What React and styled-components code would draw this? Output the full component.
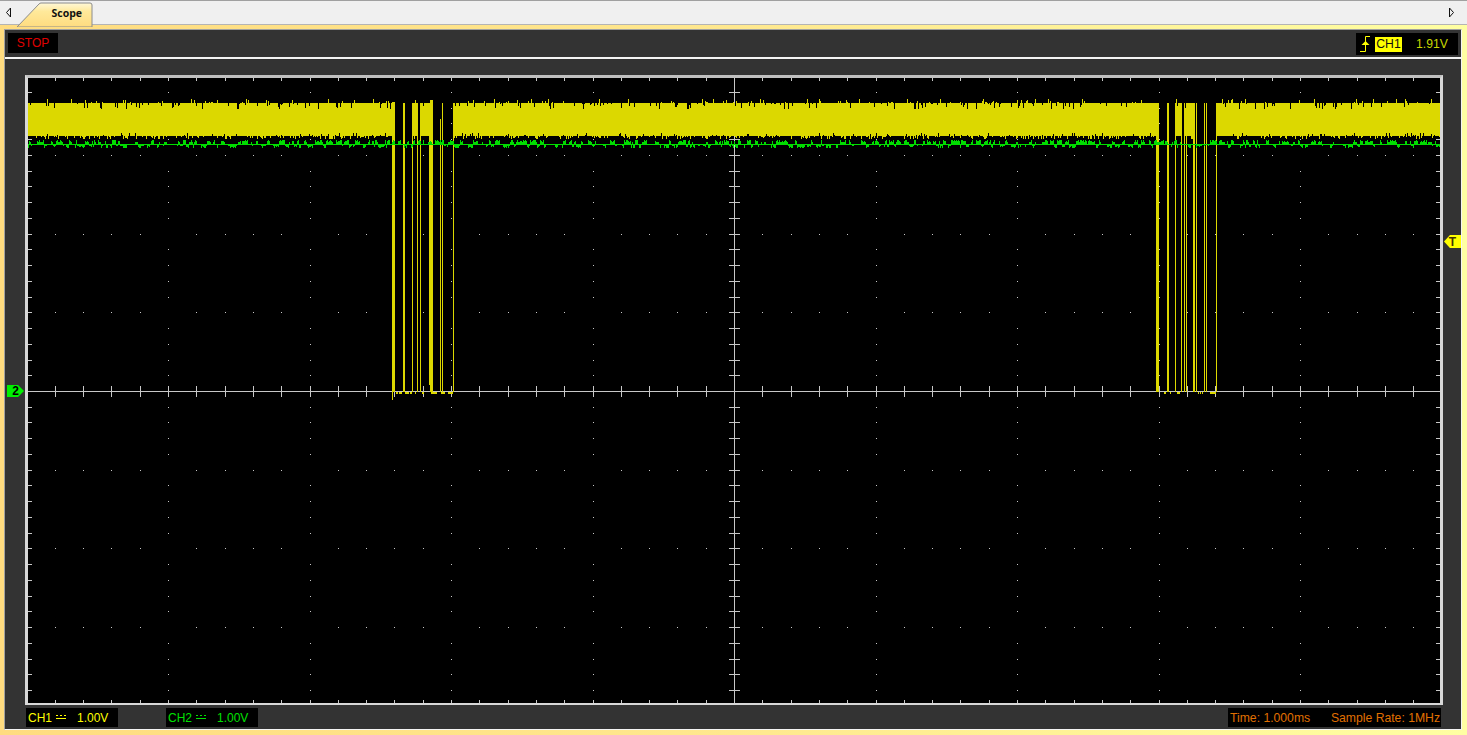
import styled, { createGlobalStyle } from 'styled-components'

const GlobalStyle = createGlobalStyle`
  html, body { margin: 0; padding: 0; background: #000; }
  body { font-family: "Liberation Sans", Arial, sans-serif; }
`

const Page = styled.div`
  width: 1467px;
  height: 735px;
  display: flex;
  flex-direction: column;
  overflow: hidden;
  background: linear-gradient(90deg, #ffdc80 0%, #ffe88e 50%, #ffffa2 100%);
`

const TabBar = styled.div`
  height: 25px;
  box-sizing: border-box;
  display: flex;
  align-items: stretch;
  background: #f0f0f0;
  border-top: 1px solid #a0a0a0;
  border-bottom: 1px solid #b4b4b4;
`

const NavButton = styled.div`
  width: 17px;
  display: flex;
  align-items: center;
  justify-content: center;
  margin-left: ${p => p.$right ? 'auto' : '0'};
  margin-right: ${p => p.$right ? '7px' : '0'};
`

const Tab = styled.div`
  position: relative;
  width: 76px;
  height: 25px;
  margin-top: 1px;
  display: flex;
  align-items: center;
  justify-content: flex-end;
  padding: 0 11px 3px 0;
  box-sizing: border-box;
  font-family: "Open Sans", sans-serif;
  font-weight: 700;
  font-size: 10.5px;
  color: #111;
`

const TabShape = styled.svg`
  position: absolute;
  left: 0;
  top: 0;
`

const TabLabel = styled.span`
  position: relative;
`

const Panel = styled.div`
  position: relative;
  flex: 1;
  margin: 4px 5px 5px 4px;
  display: flex;
  flex-direction: column;
  background: #333333;
  border: 1px solid #f4f4f4;
  border-left-color: #a0a0a0;
  border-top-color: #a0a0a0;
`

const TopBar = styled.div`
  height: 29px;
  box-sizing: border-box;
  padding: 3px 3px 0;
  display: flex;
  justify-content: space-between;
  align-items: flex-start;
  border-bottom: 2px solid #f4f4f4;
`

const StatusBox = styled.div`
  width: 50px;
  height: 20px;
  background: #000;
  color: #e00000;
  font-size: 12px;
  line-height: 21px;
  text-align: center;
`

const TriggerBox = styled.div`
  width: 102px;
  height: 22px;
  box-sizing: border-box;
  padding-left: 3px;
  display: flex;
  align-items: center;
  background: #000;
  font-size: 12.2px;
`

const TriggerChannel = styled.span`
  width: 27px;
  height: 15px;
  margin-left: 3px;
  background: #ffff00;
  color: #111;
  line-height: 15px;
  text-align: center;
`

const TriggerLevel = styled.span`
  margin-left: 14px;
  color: #c8d800;
`

const Plot = styled.div`
  height: 630px;
  box-sizing: border-box;
  margin: 16px 18px 0 20px;
  background: #000;
  border: 3px solid #d8d8d8;
  border-bottom-width: 2px;
  border-top-color: #c0c0c0;
`

const Scope = styled.svg`
  display: block;
`

const BottomBar = styled.div`
  flex: 1;
  padding: 3px 20px 0 21px;
  display: flex;
  align-items: flex-start;
  gap: 48px;
`

const ChannelBox = styled.div`
  width: 92px;
  height: 19px;
  box-sizing: border-box;
  padding-left: 2px;
  display: flex;
  align-items: center;
  background: #000;
  color: ${p => p.$color};
  font-size: 12px;
`

const Coupling = styled.svg`
  margin-left: 4px;
  margin-right: 11px;
`

const TimeBox = styled.div`
  width: 213px;
  height: 19px;
  box-sizing: border-box;
  margin-left: auto;
  padding: 0 1px 0 2px;
  display: flex;
  align-items: center;
  justify-content: space-between;
  background: #000;
  color: #e07000;
  font-size: 12.2px;
`

const Marker = styled.div`
  position: absolute;
  top: ${p => p.$top}px;
  left: ${p => p.$left}px;
  width: 17px;
  height: ${p => p.$h}px;
  display: flex;
  align-items: center;
  justify-content: center;
  background: ${p => p.$color};
  color: ${p => p.$text};
  font-family: "Liberation Sans", sans-serif;
  font-weight: 700;
  font-size: 12px;
  clip-path: ${p => p.$shape};
`

// scope trace data, page coordinates
const CX = 734
const CY = 391
const XMINOR = 28.3
const YMINOR = 15.74
const X0 = 28
const X1 = 1440
const YELLOW = '#dcd800'
const GREEN = '#00dc00'
const GRID = '#c8c8c8'

let seed = 73
const rnd = () => {
  seed = (seed * 1664525 + 1013904223) % 4294967296
  return seed / 4294967296
}

const bands = [
  [28, 393], [412, 418], [421, 430], [453, 1156],
  [1176, 1182], [1184, 1194], [1217, 1440],
]

const tall = [
  [392, 395, 102, 392], [403, 405, 103, 392], [412, 413, 103, 392], [417, 418, 103, 392],
  [420, 421, 103, 392], [429, 430, 103, 385], [430, 433, 100, 392], [440, 441, 119, 392],
  [442, 443, 103, 392], [453, 454, 103, 392], [392, 393, 392, 400],
  [1156, 1159, 103, 392], [1167, 1169, 103, 392], [1175, 1176, 103, 392], [1181, 1182, 103, 392],
  [1184, 1185, 113, 392], [1186, 1187, 103, 392], [1193, 1195, 103, 392], [1196, 1197, 103, 392],
  [1204, 1205, 103, 392], [1206, 1207, 103, 392], [1216, 1217, 103, 392],
]

const blobs = [
  [396, 398], [399, 402], [405, 409], [410, 412], [415, 416], [422, 424], [431, 437], [441, 445], [448, 453],
  [1164, 1166], [1170, 1171], [1177, 1180], [1198, 1199], [1200, 1201], [1202, 1203], [1210, 1216],
]

const buildBand = () => {
  let d = ''
  bands.forEach(([a, b]) => {
    for (let x = a; x < b; x++) {
      let top = 103
      let bottom = 136
      const r = rnd()
      if (r < 0.14) top = 104 + Math.floor(rnd() * 6)
      else if (r < 0.24) top = 99 + Math.floor(rnd() * 4)
      const q = rnd()
      if (q < 0.08) bottom = 133 + Math.floor(rnd() * 3)
      else if (q < 0.34) bottom = 137 + Math.floor(rnd() * 3)
      d += `M${x + 0.5} ${top}V${bottom}`
    }
  })
  return d
}

const buildGreen = () => {
  let d = `M${X0} 144.5H${X1}`
  let x = X0
  while (x < X1) {
    const r = rnd()
    const w = 1 + Math.floor(rnd() * 3)
    for (let i = 0; i < w && x + i < X1; i++) {
      const c = x + i + 0.5
      if (r < 0.4) d += `M${c} ${140 + Math.floor(rnd() * 3)}V145`
      else if (r < 0.7) d += `M${c} 144V${146 + Math.floor(rnd() * 3)}`
    }
    x += w
  }
  return d
}

const buildTall = () =>
  tall.map(([a, b, y1, y2]) => `M${a} ${y1}H${b}V${y2}H${a}Z`).join('') +
  blobs.map(([a, b]) => `M${a} 392H${b}V394H${a}Z`).join('')

const buildGrid = () => {
  const lines = []
  const dots = []
  for (let i = -25; i <= 25; i++) {
    const x = Math.round(CX + i * XMINOR)
    lines.push(`M${x + 0.5} 78V81`, `M${x + 0.5} 700V703`, `M${x + 0.5} ${CY - 5}V${CY + 6}`)
    if (i % 5 !== 0) {
      for (let k = -3; k <= 3; k++) dots.push([x, Math.round(CY + k * 5 * YMINOR)])
    }
  }
  for (let i = -19; i <= 19; i++) {
    const y = Math.round(CY + i * YMINOR)
    lines.push(`M28 ${y + 0.5}H32`, `M1436 ${y + 0.5}H1440`, `M${CX - 5} ${y + 0.5}H${CX + 6}`)
    if (i % 5 !== 0) {
      for (let k = -4; k <= 4; k++) dots.push([Math.round(CX + k * 5 * XMINOR), y])
    }
  }
  return { ticks: lines.join(''), dots }
}

const bandPath = buildBand()
const greenPath = buildGreen()
const tallPath = buildTall()
const grid = buildGrid()

const Arrow = ({ right }) => (
  <svg width="7" height="11" viewBox="0 0 7 11">
    <path
      d={right ? 'M1.5 1L5.5 5.5L1.5 10Z' : 'M5.5 1L1.5 5.5L5.5 10Z'}
      fill="#f0f0f0"
      stroke="#111"
      strokeWidth="1"
    />
  </svg>
)

const CouplingIcon = ({ color }) => (
  <Coupling width="10" height="7" viewBox="0 0 10 7">
    <path d="M0 1.5H10" stroke={color} strokeDasharray="2 2" fill="none" />
    <path d="M0 4.5H10" stroke={color} fill="none" />
  </Coupling>
)

const App = () => {
  return (
    <Page>
      <GlobalStyle />
      <TabBar>
        <NavButton><Arrow /></NavButton>
        <Tab>
          <TabShape width="76" height="25" viewBox="0 0 76 25">
            <defs>
              <linearGradient id="tabFill" x1="0" y1="0" x2="0" y2="1">
                <stop offset="0" stopColor="#fff8d8" />
                <stop offset="0.35" stopColor="#ffe99a" />
                <stop offset="1" stopColor="#ffdc80" />
              </linearGradient>
            </defs>
            <path d="M0 25L22 2Q23 1 24 1H73Q75 1 75 3V25Z" fill="url(#tabFill)" stroke="#8c8c8c" />
          </TabShape>
          <TabLabel>Scope</TabLabel>
        </Tab>
        <NavButton $right><Arrow right /></NavButton>
      </TabBar>

      <Panel>
        <TopBar>
          <StatusBox>STOP</StatusBox>
          <TriggerBox>
            <svg width="13" height="18" viewBox="0 0 13 18">
              <path d="M1 16.5H6.5V1.5H11" stroke="#ffff00" fill="none" />
              <path d="M2.5 10L6.5 6L10.5 10Z" fill="#ffff00" />
            </svg>
            <TriggerChannel>CH1</TriggerChannel>
            <TriggerLevel>1.91V</TriggerLevel>
          </TriggerBox>
        </TopBar>

        <Plot>
          <Scope width="1412" height="625" viewBox="28 78 1412 625" shapeRendering="crispEdges">
            <path d={`M${CX + 0.5} 78V703M28 ${CY + 0.5}H1440`} stroke={GRID} fill="none" />
            <path d={grid.ticks} stroke={GRID} fill="none" />
            {grid.dots.map(([x, y], i) => (
              <rect key={i} x={x} y={y} width="1" height="1" fill={GRID} />
            ))}
            <path d={bandPath} stroke={YELLOW} fill="none" />
            <path d={tallPath} fill={YELLOW} />
            <path d={greenPath} stroke={GREEN} fill="none" />
          </Scope>
        </Plot>

        <BottomBar>
          <ChannelBox $color="#ffff00">
            CH1
            <CouplingIcon color="#ffff00" />
            1.00V
          </ChannelBox>
          <ChannelBox $color="#00e000">
            CH2
            <CouplingIcon color="#00e000" />
            1.00V
          </ChannelBox>
          <TimeBox>
            <span>Time: 1.000ms</span>
            <span>Sample Rate: 1MHz</span>
          </TimeBox>
        </BottomBar>

        <Marker
          $top={205}
          $left={1439}
          $h={13}
          $color="#ffff00"
          $text="#443300"
          $shape="polygon(0 50%, 35% 0, 100% 0, 100% 100%, 35% 100%)"
        >
          T
        </Marker>
        <Marker
          $top={355}
          $left={2}
          $h={12}
          $color="#00f000"
          $text="#000"
          $shape="polygon(0 0, 65% 0, 100% 50%, 65% 100%, 0 100%)"
        >
          2
        </Marker>
      </Panel>
    </Page>
  )
}

export default App
